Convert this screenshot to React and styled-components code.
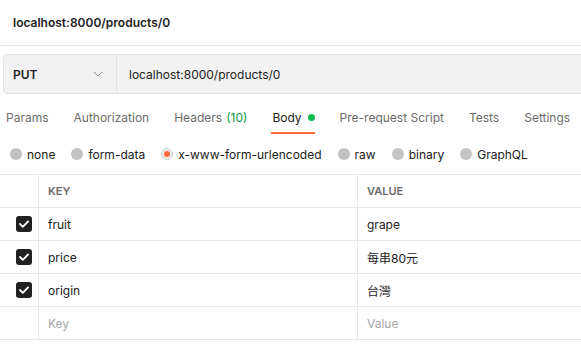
import React from 'react';
import styled, { createGlobalStyle } from 'styled-components';

const GlobalStyle = createGlobalStyle`
    body {
        margin: 0;
        background: #ffffff;
        font-family: Inter, "Noto Sans CJK TC", sans-serif;
        color: #212121;
        overflow: hidden;
    }
`;

const Page = styled.div`
    width: 581px;
`;

const TitleBar = styled.div`
    height: 45px;
    display: flex;
    align-items: center;
    padding-left: 13px;
    border-bottom: 1px solid #e6e6e6;
    font-size: 12px;
    font-weight: 600;
`;

const UrlBar = styled.div`
    margin: 8px -12px 0 3px;
    height: 38px;
    display: flex;
    background: #f2f2f2;
    border: 1px solid #e2e2e2;
    border-radius: 4px;
`;

const Method = styled.div`
    width: 113px;
    display: flex;
    align-items: center;
    justify-content: space-between;
    padding: 0 13px 0 9px;
    box-sizing: border-box;
    border-right: 1px solid #e2e2e2;
    font-size: 12px;
    font-weight: 600;
`;

const UrlText = styled.div`
    display: flex;
    align-items: center;
    padding-left: 12px;
    font-size: 12px;
`;

const Tabs = styled.div`
    display: flex;
    gap: 25px;
    padding-left: 6px;
    margin-top: 16px;
    height: 24px;
    white-space: nowrap;
`;

const Tab = styled.div`
    position: relative;
    display: flex;
    align-items: flex-start;
    font-size: 12px;
    color: ${p => (p.$active ? '#212121' : '#6b6b6b')};

    &::after {
        content: '';
        display: ${p => (p.$active ? 'block' : 'none')};
        position: absolute;
        left: -1px;
        right: 0;
        bottom: 0;
        height: 2px;
        background: #ff6c37;
    }
`;

const Count = styled.span`
    color: #0a9a46;
    margin-left: 4px;
`;

const Dot = styled.span`
    width: 7px;
    height: 7px;
    border-radius: 50%;
    background: #0cbb52;
    margin: 4px 0 0 6px;
`;

const Radios = styled.div`
    display: flex;
    align-items: center;
    gap: 16px;
    padding-left: 10px;
    height: 40px;
    white-space: nowrap;
`;

const RadioItem = styled.label`
    display: flex;
    align-items: center;
    gap: 5px;
    font-size: 12px;
`;

const Circle = styled.span`
    width: 12px;
    height: 12px;
    border-radius: 50%;
    box-sizing: border-box;
    background: ${p => (p.$on ? '#ececec' : '#c2c2c2')};
    border: ${p => (p.$on ? '1px solid #cfcfcf' : 'none')};
    display: flex;
    align-items: center;
    justify-content: center;

    &::before {
        content: '';
        display: ${p => (p.$on ? 'block' : 'none')};
        width: 6px;
        height: 6px;
        border-radius: 50%;
        background: #ff6c37;
    }
`;

const Table = styled.div`
    border-top: 1px solid #e8e8e8;
    margin-right: -20px;
`;

const Row = styled.div`
    display: grid;
    grid-template-columns: 38px 319px 1fr;
    height: 32px;
    border-bottom: 1px solid #e8e8e8;
`;

const Cell = styled.div`
    display: flex;
    align-items: center;
    padding-left: ${p => (p.$check ? '16px' : '9px')};
    border-left: ${p => (p.$check ? 'none' : '1px solid #e8e8e8')};
    font-size: ${p => (p.$head ? '11px' : '12px')};
    font-weight: ${p => (p.$head ? 600 : 400)};
    color: ${p => (p.$head ? '#6b6b6b' : p.$muted ? '#a6a6a6' : '#212121')};
`;

const Check = styled.span`
    width: 16px;
    height: 16px;
    border-radius: 3px;
    background: #212121;
    display: flex;
    align-items: center;
    justify-content: center;
`;

const Chevron = () => (
    <svg width="10" height="6" viewBox="0 0 10 6" fill="none">
        <path d="M1 1l4 4 4-4" stroke="#8a8a8a" strokeWidth="1" />
    </svg>
);

const CheckMark = () => (
    <svg width="10" height="8" viewBox="0 0 10 8" fill="none">
        <path d="M1 4l2.8 2.8L9 1.5" stroke="#fff" strokeWidth="1.8" strokeLinecap="round" strokeLinejoin="round" />
    </svg>
);

const radios = ['none', 'form-data', 'x-www-form-urlencoded', 'raw', 'binary', 'GraphQL'];
const rows = [
    ['fruit', 'grape'],
    ['price', '每串80元'],
    ['origin', '台灣'],
];

function App() {
    return (
        <Page>
            <GlobalStyle />
            <TitleBar>localhost:8000/products/0</TitleBar>
            <UrlBar>
                <Method>
                    PUT
                    <Chevron />
                </Method>
                <UrlText>localhost:8000/products/0</UrlText>
            </UrlBar>
            <Tabs>
                <Tab>Params</Tab>
                <Tab>Authorization</Tab>
                <Tab>
                    Headers<Count>(10)</Count>
                </Tab>
                <Tab $active>
                    Body<Dot />
                </Tab>
                <Tab>Pre-request Script</Tab>
                <Tab>Tests</Tab>
                <Tab>Settings</Tab>
            </Tabs>
            <Radios>
                {radios.map(r => (
                    <RadioItem key={r}>
                        <Circle $on={r === 'x-www-form-urlencoded'} />
                        {r}
                    </RadioItem>
                ))}
            </Radios>
            <Table>
                <Row>
                    <Cell $check />
                    <Cell $head>KEY</Cell>
                    <Cell $head>VALUE</Cell>
                </Row>
                {rows.map(([k, v]) => (
                    <Row key={k}>
                        <Cell $check>
                            <Check>
                                <CheckMark />
                            </Check>
                        </Cell>
                        <Cell>{k}</Cell>
                        <Cell>{v}</Cell>
                    </Row>
                ))}
                <Row>
                    <Cell $check />
                    <Cell $muted>Key</Cell>
                    <Cell $muted>Value</Cell>
                </Row>
            </Table>
        </Page>
    );
}

export default App;
